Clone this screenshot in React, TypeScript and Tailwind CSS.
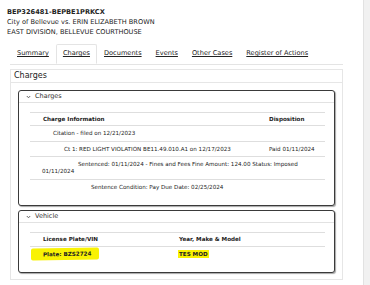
const tabs = ["Summary", "Charges", "Documents", "Events", "Other Cases", "Register of Actions"];

function Box({ title, children }: { title: string; children: React.ReactNode }) {
  return (
    <div className="mx-[7px] rounded-[3px] border border-[#3a3a3a] bg-white shadow-[1px_1px_1px_rgba(0,0,0,0.35)]">
      <div className="flex h-[12px] items-center gap-[4px] border-b border-[#e2e2e2] pl-[7px] text-[6.5px] text-[#333]">
        <svg width="5" height="4" viewBox="0 0 5 4" className="mt-px">
          <path d="M0.8 1 L2.5 2.8 L4.2 1" fill="none" stroke="#555" strokeWidth="0.9" />
        </svg>
        <span>{title}</span>
      </div>
      <div className="pl-[11px] pr-[9px]">{children}</div>
    </div>
  );
}

export default function App() {
  return (
    <div className="flex h-[285px] w-[370px] overflow-hidden bg-white font-['DejaVu_Sans',sans-serif] text-[#222]">
      <div className="flex-1">
        <div className="pl-[7px] pt-[7px] text-[6.6px] leading-[10px]">
          <div className="font-bold">BEP326481-BEPBE1PRKCX</div>
          <div>City of Bellevue vs. ERIN ELIZABETH BROWN</div>
          <div>EAST DIVISION, BELLEVUE COURTHOUSE</div>
        </div>

        <div className="ml-[10px] mt-[7px] flex w-[333px] border-b border-[#e4e4e4] text-[6.6px]">
          {tabs.map((t) => (
            <div
              key={t}
              className={
                t === "Charges"
                  ? "-mb-px flex h-[20px] items-center rounded-t-[2px] border border-b-white border-[#e4e4e4] bg-white px-[6px]"
                  : "flex h-[20px] items-center px-[7px]"
              }
            >
              <span className="underline">{t}</span>
            </div>
          ))}
        </div>

        <div className="ml-[10px] mt-[4px] h-[211px] w-[333px] border border-[#e6e6e6]">
          <div className="flex h-[13px] items-center border-b border-[#e6e6e6] pl-[3px] text-[8px]">Charges</div>

          <div className="pt-[7px]">
            <Box title="Charges">
              <div className="mt-[9px] border-t border-[#dedede] text-[5.6px]">
                <div className="flex h-[13px] items-center border-b border-[#dedede] font-bold">
                  <div className="w-[239px] pl-[13px]">Charge Information</div>
                  <div>Disposition</div>
                </div>
                <div className="flex h-[16px] items-center border-b border-[#dedede] pl-[23px]">
                  Citation - filed on 12/21/2023
                </div>
                <div className="flex h-[15px] items-center border-b border-[#dedede]">
                  <div className="w-[239px] pl-[34px]">Ct 1: RED LIGHT VIOLATION BE11.49.010.A1 on 12/17/2023</div>
                  <div>Paid 01/11/2024</div>
                </div>
                <div className="flex h-[23px] items-center border-b border-[#dedede] pl-[12px] pr-[20px]">
                  <div className="indent-[36px] leading-[7px]">
                    Sentenced: 01/11/2024 - Fines and Fees Fine Amount: 124.00 Status: Imposed 01/11/2024
                  </div>
                </div>
                <div className="flex h-[14px] items-center pl-[61px]">
                  Sentence Condition: Pay Due Date: 02/25/2024
                </div>
                <div className="h-[11px]" />
              </div>
            </Box>
          </div>

          <div className="pt-[4px]">
            <Box title="Vehicle">
              <div className="mt-[9px] border-t border-[#dedede] text-[5.6px]">
                <div className="flex h-[14px] items-center border-b border-[#dedede] font-bold">
                  <div className="w-[149px] pl-[13px]">License Plate/VIN</div>
                  <div>Year, Make &amp; Model</div>
                </div>
                <div className="flex h-[14px] items-center font-semibold">
                  <div className="w-[149px] pl-[1px]">
                    <span className="-skew-y-1 inline-block rounded-[2px] bg-[#f9f203] py-[2px] pl-[12px] pr-[8px]">
                      Plate: BZS2724
                    </span>
                  </div>
                  <div className="-ml-[1px]">
                    <span className="bg-[#f9f203] px-[1px] py-[1px]">TES MOD</span>
                  </div>
                </div>
                <div className="h-[11px]" />
              </div>
            </Box>
          </div>
        </div>
      </div>
      <div className="h-full w-[7px] border-l border-[#e2e2e2] bg-[#f1f1f1]" />
    </div>
  );
}
